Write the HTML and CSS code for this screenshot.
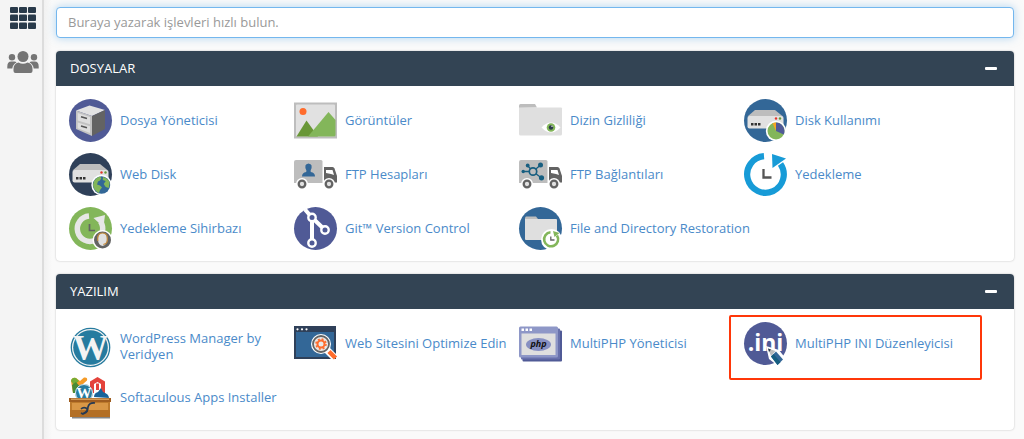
FILE: index.html
```html
<!DOCTYPE html>
<html lang="tr">
<head>
<meta charset="utf-8">
<meta name="viewport" content="width=device-width, initial-scale=1">
<title>cPanel</title>
<link rel="stylesheet" href="styles.css">
</head>
<body>
<div class="layout">
  <nav class="sidebar" aria-label="Menü">
    <a href="#" class="nav-link nav-link-active" aria-label="Ana Sayfa">
      <svg class="nav-icon" viewBox="0 0 32 24"><g fill="#293a4a"><rect x="3" y="1" width="8" height="6" rx="1"/><rect x="12" y="1" width="8" height="6" rx="1"/><rect x="21" y="1" width="8" height="6" rx="1"/><rect x="3" y="8.500" width="8" height="6.500" rx="1"/><rect x="12" y="8.500" width="8" height="6.500" rx="1"/><rect x="21" y="8.500" width="8" height="6.500" rx="1"/><rect x="3" y="16.500" width="8" height="6.500" rx="1"/><rect x="12" y="16.500" width="8" height="6.500" rx="1"/><rect x="21" y="16.500" width="8" height="6.500" rx="1"/></g></svg>
    </a>
    <a href="#" class="nav-link" aria-label="Kullanıcı Yöneticisi">
      <svg class="nav-icon" viewBox="0 0 32 24"><g fill="#757575"><circle cx="16" cy="6.500" r="5.500"/><circle cx="5" cy="7.200" r="3.200"/><circle cx="27" cy="7.200" r="3.200"/><path d="M6.500 23v-4q0-5.500 5-6.500 4.500 2.500 9 0 5 1 5 6.500v2q0 2-2 2h-15q-2 0-2-2z"/><path d="M.3 18.500v-2q0-5 4-5h3q1.500 0 2.200 1-3.700 1.800-4.200 6zM31.700 18.500v-2q0-5-4-5h-3q-1.500 0-2.200 1 3.700 1.800 4.200 6z"/></g></svg>
    </a>
  </nav>
  <main class="content">
    <input class="search" type="text" aria-label="İşlev ara" placeholder="Buraya yazarak işlevleri hızlı bulun.">

    <section class="panel">
      <header class="panel-header">
        <h2 class="panel-title">DOSYALAR</h2>
        <button class="collapse" type="button" aria-label="Daralt"></button>
      </header>
      <div class="grid">
        <a href="#" class="item">
          <svg class="icon" viewBox="0 0 43 43"><circle cx="21.500" cy="21.500" r="21.500" fill="#505a96"/><path d="M7 11.500 20.500 6.500 36 11 23 17z" fill="#e2e2e2"/><path d="M7 11.500 23 17V37L7 30z" fill="#c2c2c2"/><path d="M23 17 36 11V30L23 37z" fill="#636363"/><path d="M8.700 14 21 18V25.300L8.700 21.500zM8.700 23.500 21 27.300V34L8.700 29.300z" fill="#dedede"/><path d="M12 17.800 18 19.500M12 27 18 28.700" stroke="#555" stroke-width="1.700"/></svg>
          <span class="label">Dosya Yöneticisi</span>
        </a>
        <a href="#" class="item">
          <svg class="icon" viewBox="0 0 43 43"><path d="M0 3.500h43v36H0z" fill="#bdbdbd"/><rect x="2" y="5.500" width="39" height="32" rx="1" fill="#e1e1e1"/><circle cx="9" cy="12.500" r="3.500" fill="#ff6c2c"/><path d="M2.500 37.500 12.500 21.500 24 37.500z" fill="#699737"/><path d="M14 37.500 34.500 13 41.500 21V36q0 1.500-1.500 1.500z" fill="#83b65a"/></svg>
          <span class="label">Görüntüler</span>
        </a>
        <a href="#" class="item">
          <svg class="icon" viewBox="0 0 43 43"><path d="M0 9V6.500Q0 5 1.500 5H16l2 3.500z" fill="#bdbdbd"/><path d="M0 8.500H42q1 0 1 1V35q0 1.500-1.500 1.500h-40Q0 36.500 0 35z" fill="#dfdfdf"/><path d="M22.500 28.500Q32 18.500 41.500 28.500 32 38.500 22.500 28.500z" fill="#fff"/><circle cx="32" cy="28.500" r="4.300" fill="#83b65a"/><circle cx="32" cy="28.500" r="2.200" fill="#293a4a"/><circle cx="33" cy="27.300" r=".7" fill="#fff"/></svg>
          <span class="label">Dizin Gizliliği</span>
        </a>
        <a href="#" class="item">
          <svg class="icon" viewBox="0 0 43 43"><circle cx="21.500" cy="21.500" r="21.500" fill="#336797"/><path d="M3.500 17.500 11 11H31L39 17.500z" fill="#bdbdbd"/><rect x="3.500" y="17" width="36" height="12.500" rx="2" fill="#e1e1e1"/><g fill="#333"><path d="M7 24h2.500v2.500H7zM10.500 24H13v2.500h-2.500zM14 24h2.500v2.500H14z"/></g><circle cx="32" cy="19.500" r="1.200" fill="#e2352b"/><circle cx="36" cy="19.500" r="1.200" fill="#699737"/><circle cx="32" cy="32" r="10.200" fill="#fff"/><circle cx="32" cy="32" r="8.500" fill="#83b65a"/><path d="M32 32V23.500A8.500 8.500 0 0 1 39.700 35.500z" fill="#505a96"/><path d="M32 32 28.500 24.300A8.500 8.500 0 0 1 32 23.500z" fill="#f5a623"/></svg>
          <span class="label">Disk Kullanımı</span>
        </a>
        <a href="#" class="item">
          <svg class="icon" viewBox="0 0 43 43"><circle cx="21.500" cy="21.500" r="21.500" fill="#2f4059"/><path d="M3.500 17.500 11 11H31L39 17.500z" fill="#bdbdbd"/><rect x="3.500" y="17" width="36" height="12.500" rx="2" fill="#e1e1e1"/><g fill="#333"><path d="M7 24h2.500v2.500H7zM10.500 24H13v2.500h-2.500zM14 24h2.500v2.500H14z"/></g><circle cx="32.500" cy="19.500" r="1.200" fill="#e2352b"/><circle cx="36.500" cy="19.500" r="1.200" fill="#699737"/><circle cx="32.500" cy="32" r="10.200" fill="#fff"/><circle cx="32.500" cy="32" r="8.700" fill="#336797"/><path d="M25 28q2-3.500 5.500-4.500l2 1.500-1.500 2.500-2 1-1 3 3 1 2 2-2 2.500-1 3q-5-2-6-8z" fill="#83b65a"/><path d="M34 24q5 1 6.700 5.500l-1 5.500-3-1-2-3 2-3-3-1z" fill="#83b65a"/></svg>
          <span class="label">Web Disk</span>
        </a>
        <a href="#" class="item">
          <svg class="icon" viewBox="0 0 43 43"><path d="M0 9q0-2 2-2h25q1.500 0 1.500 1.500V30H0z" fill="#bdbdbd"/><path d="M8 23.500q0-4 4.200-4.500l.2-1.500q-3-6.500 2.100-7 5.100.5 2.100 7l.2 1.500q4.200.5 4.200 4.500z" fill="#336797"/><path d="M30 14h8.500q1.500 0 2 1.500L43 23v6.500H30z" fill="#636363"/><path d="M32 17h6.500l1.500 5-3-1-5-1z" fill="#fff"/><circle cx="8" cy="31" r="6" fill="#fff"/><circle cx="35" cy="31" r="6" fill="#fff"/><circle cx="8" cy="31" r="3.300" fill="#e1e1e1" stroke="#636363" stroke-width="2.300"/><circle cx="35" cy="31" r="3.300" fill="#e1e1e1" stroke="#636363" stroke-width="2.300"/></svg>
          <span class="label">FTP Hesapları</span>
        </a>
        <a href="#" class="item">
          <svg class="icon" viewBox="0 0 43 43"><path d="M0 9q0-2 2-2h25q1.500 0 1.500 1.500V30H0z" fill="#bdbdbd"/><g stroke="#175e80" stroke-width="1.300"><path d="M14 18.500H4M14 18.500 8.500 12.500M14 18.500 21.500 12M14 18.500 22.500 25" fill="none"/><circle cx="14" cy="18.500" r="3.700" fill="#bdbdbd" stroke-width="1.700"/></g><g fill="#175e80"><circle cx="4.200" cy="18.500" r="1.700"/><circle cx="8.700" cy="12.500" r="1.900"/><circle cx="21.500" cy="12" r="2.500"/><circle cx="22.500" cy="24.800" r="2.600"/></g><path d="M30 14h8.500q1.500 0 2 1.500L43 23v6.500H30z" fill="#636363"/><path d="M32 17h6.500l1.500 5-3-1-5-1z" fill="#fff"/><circle cx="8" cy="31" r="6" fill="#fff"/><circle cx="35" cy="31" r="6" fill="#fff"/><circle cx="8" cy="31" r="3.300" fill="#e1e1e1" stroke="#636363" stroke-width="2.300"/><circle cx="35" cy="31" r="3.300" fill="#e1e1e1" stroke="#636363" stroke-width="2.300"/></svg>
          <span class="label">FTP Bağlantıları</span>
        </a>
        <a href="#" class="item">
          <svg class="icon" viewBox="0 0 43 43"><path d="M20 3.200A18.300 18.300 0 1 0 36.500 11" fill="none" stroke="#179bd7" stroke-width="6.200"/><path d="M28 1 28.500 15 42 5.500z" fill="#179bd7"/><path d="M19.500 16V24.500H27.500" fill="none" stroke="#555" stroke-width="2.300"/></svg>
          <span class="label">Yedekleme</span>
        </a>
        <a href="#" class="item">
          <svg class="icon" viewBox="0 0 43 43"><circle cx="21.500" cy="21.500" r="21.500" fill="#83b65a"/><path d="M20 9A12.700 12.700 0 1 0 31.500 14.500" fill="none" stroke="#e7e7e7" stroke-width="5.500"/><path d="M24.500 11 36 8 34.500 20z" fill="#e7e7e7"/><path d="M20.500 17V23.500H26" fill="none" stroke="#636363" stroke-width="1.700"/><circle cx="33.500" cy="33" r="10" fill="#fff"/><circle cx="33.500" cy="33" r="8.500" fill="#636363"/><path d="M29 32q0-6 4.500-6t4.500 6q0 6-4.500 7Q29 38 29 32z" fill="#e1e1e1"/><path d="M28.700 34V30q1-4 4.800-4 4 0 4.800 4v4q-.5 3-4 3.500" fill="none" stroke="#c58b3d" stroke-width="1.200"/></svg>
          <span class="label">Yedekleme Sihirbazı</span>
        </a>
        <a href="#" class="item">
          <svg class="icon" viewBox="0 0 43 43"><circle cx="21.500" cy="21.500" r="21.500" fill="#505a96"/><g fill="none" stroke="#fff"><path d="M11 2.500 18 10.500 31 23M18 10.500V36" stroke-width="4"/><g fill="#505a96" stroke-width="2.400"><circle cx="18" cy="10.500" r="3.700"/><circle cx="31" cy="23" r="3.700"/><circle cx="18" cy="36" r="3.700"/></g></g></svg>
          <span class="label">Git™ Version Control</span>
        </a>
        <a href="#" class="item">
          <svg class="icon" viewBox="0 0 43 43"><circle cx="21.500" cy="21.500" r="21.500" fill="#336797"/><path d="M6 12V10.500L7 9.500H17l2 2.500z" fill="#bdbdbd"/><path d="M6 12H37q1 0 1 1V32q0 1-1 1H7q-1 0-1-1z" fill="#dfdfdf"/><circle cx="32.500" cy="32.500" r="10.500" fill="#fff"/><path d="M31.500 25.300A7 7 0 1 0 38 28.500" fill="none" stroke="#83b65a" stroke-width="2.600"/><path d="M34 24 40.500 26 35.500 30z" fill="#83b65a"/><path d="M31.800 29.500V33H35.500" fill="none" stroke="#636363" stroke-width="1.300"/></svg>
          <span class="label">File and Directory Restoration</span>
        </a>
      </div>
    </section>

    <section class="panel">
      <header class="panel-header">
        <h2 class="panel-title">YAZILIM</h2>
        <button class="collapse" type="button" aria-label="Daralt"></button>
      </header>
      <div class="grid">
        <a href="#" class="item">
          <svg class="icon" viewBox="0 0 43 43"><circle cx="21.500" cy="21.500" r="19.200" fill="#f3f3f3" stroke="#267b9f" stroke-width="1.300"/><circle cx="21.500" cy="21.500" r="17.300" fill="#267b9f"/><text x="21.500" y="34" class="wp-letter">W</text></svg>
          <span class="label">WordPress Manager by Veridyen</span>
        </a>
        <a href="#" class="item">
          <svg class="icon" viewBox="0 0 43 43"><path d="M0 4h42v33H0z" fill="#2f4059"/><path d="M2 10h38v25H2z" fill="#336797"/><g fill="#fff"><circle cx="3.500" cy="7.300" r="1.100"/><circle cx="8" cy="7.300" r="1.100"/><circle cx="12.500" cy="7.300" r="1.100"/></g><path d="M33 28 41 36" stroke="#fff" stroke-width="7"/><circle cx="27" cy="22" r="10" fill="#fff"/><circle cx="27" cy="22" r="8" fill="#e8e8e8" stroke="#636363" stroke-width="1.800"/><path d="M35 29.500 41.500 36" stroke="#ff6c2c" stroke-width="4.500"/><circle cx="27" cy="22" r="3.500" fill="none" stroke="#ff6c2c" stroke-width="2"/><circle cx="27" cy="22" r="5" fill="none" stroke="#ff6c2c" stroke-width="1.500" stroke-dasharray="2 1.930"/></svg>
          <span class="label">Web Sitesini Optimize Edin</span>
        </a>
        <a href="#" class="item">
          <svg class="icon" viewBox="0 0 43 43"><rect x="3.500" y="8.500" width="39.500" height="31" rx="1" fill="#505a96"/><rect x="2" y="6.500" width="39" height="31" rx="1" fill="#6871ac"/><rect x="0" y="4.500" width="39" height="31" rx="1.500" fill="#8e97c7"/><path d="M2.500 11.500h34V33h-34z" fill="#dfdfdf"/><g fill="#fff"><rect x="2.500" y="6.500" width="2.500" height="2.500"/><rect x="6.500" y="6.500" width="2.500" height="2.500"/><rect x="10.500" y="6.500" width="2.500" height="2.500"/></g><ellipse cx="19.500" cy="22.500" rx="12.500" ry="6.500" fill="#8790c2"/><text x="19.500" y="25" class="php-text">php</text></svg>
          <span class="label">MultiPHP Yöneticisi</span>
        </a>
        <a href="#" class="item item-highlighted">
          <svg class="icon" viewBox="0 0 43 43"><circle cx="21.500" cy="21.500" r="21.500" fill="#505a96"/><text x="21.500" y="28.500" class="ini-text">.ini</text><path d="M22 24 35 28 42 37 34 44 25 37z" fill="#fff"/><path d="M24 26.500 31.500 29 27 34z" fill="#bdbdbd"/><path d="M24 26.500 27 27.500 25 30z" fill="#293a4a"/><path d="M32 29.500 39 37.500 33.500 43 27 34.500z" fill="#336797"/><path d="M29.500 32 36.500 40.300 33.500 43 27 34.500z" fill="#175e80"/></svg>
          <span class="label">MultiPHP INI Düzenleyicisi</span>
        </a>
        <a href="#" class="item">
          <svg class="icon" viewBox="0 0 43 43"><path d="M4 17 2 5q1-4 5-3l4 3 4-3.500q4-.5 3 3L14 8l4 9z" fill="#f59b27"/><path d="M2 5q1-4 5-3l3 3-5 4z" fill="#74ad36"/><path d="M3 9 7 6l5 6-3 5H4z" fill="#4a8b35"/><path d="M21 17V5.500L28.500 1 36 5.500V17h-4V8l-3.500-2L25 8v9z" fill="#e4423b"/><path d="M27 7.500h3V14h-3z" fill="#e4423b"/><circle cx="15" cy="17" r="9" fill="#267b9f"/><circle cx="15" cy="17" r="8.500" fill="none" stroke="#dcebf2"/><text x="15" y="22" class="box-letter">W</text><path d="M25 21q0-4 4-5l3-4 2 4q6 2 6 6z" fill="#17639a"/><path d="M3 41h38v1.500H3z" fill="#858585"/><path d="M1 25h40v16H1z" fill="#bd7a2c"/><path d="M3 27h36v12H3z" fill="#d99746"/><path d="M1 34h40v7H1z" fill="#b36f25"/><path d="M0 22h42v4H0z" fill="#9f5d20"/><path d="M2 22.500h38v1.500H2z" fill="#d29a57"/><path d="M26 27q-6-.5-7 4 0 5-5 6.500M12 33q2-2 5-1 4 3-3 6l-2-1" fill="none" stroke="#263a53" stroke-width="1.700"/></svg>
          <span class="label">Softaculous Apps Installer</span>
        </a>
      </div>
    </section>
  </main>
</div>
</body>
</html>
```
FILE: styles.css
```css
* { box-sizing: border-box; }

body {
  margin: 0;
  background: #fafafa;
  color: #333;
  font: 13px/16px "Open Sans", "Noto Sans", sans-serif;
}

.layout {
  display: flex;
  min-height: 100vh;
}

.sidebar {
  display: flex;
  flex: none;
  flex-direction: column;
  align-items: center;
  gap: 20px;
  width: 44px;
  padding: 6px 0 0 4px;
  background: #f4f4f4;
  border-right: 2px solid #dcdcdc;
}

.nav-link,
.nav-icon {
  display: block;
}

.nav-icon {
  width: 32px;
  height: 24px;
}

.content {
  display: flex;
  flex: 1;
  flex-direction: column;
  gap: 13px;
  min-width: 0;
  padding: 7px 10px 9px 12px;
  background: linear-gradient(90deg, #f1f1f1, #fafafa 8px);
}

.search {
  width: 100%;
  height: 31px;
  padding: 0 11px 2px;
  border: 1px solid #74b7ee;
  border-radius: 4px;
  background: #fff;
  box-shadow: 0 0 8px rgba(102, 175, 233, 0.5);
  color: #555;
  font: inherit;
  outline: none;
}

.search::placeholder {
  color: #999;
  opacity: 1;
}

.panel {
  background: #fff;
  border-radius: 4px;
  box-shadow: 0 0 2px rgba(0, 0, 0, 0.25);
}

.panel-header {
  display: flex;
  align-items: center;
  justify-content: space-between;
  height: 35px;
  padding: 0 15px 0 14px;
  border-radius: 4px 4px 0 0;
  background: #334454;
  color: #fff;
}

.panel-title {
  margin: 0;
  padding-bottom: 2px;
  font-size: 13px;
  font-weight: 400;
}

.collapse {
  display: flex;
  align-items: center;
  justify-content: center;
  width: 16px;
  height: 16px;
  padding: 0;
  border: 0;
  background: none;
}

.collapse::before {
  content: "";
  width: 12px;
  height: 3px;
  border-radius: 1px;
  background: #fff;
}

.grid {
  display: grid;
  grid-template-columns: repeat(auto-fill, 225px);
  grid-auto-rows: 50px;
  row-gap: 4px;
  align-items: start;
  padding: 13px 13px 4px;
}

.item {
  display: flex;
  align-items: center;
  gap: 8px;
  position: relative;
  color: #4a8ac9;
  text-decoration: none;
}

.icon {
  flex: none;
  width: 43px;
  height: 43px;
  overflow: visible;
}

/* Labels may run a little into the column gutter before they wrap. */
.label {
  margin-right: -12px;
  padding: 8px 0 10px;
}

.item-highlighted::after {
  content: "";
  position: absolute;
  inset: -7px -13px -15px -15px;
  border: 2px solid #ff3709;
  border-radius: 2px;
  pointer-events: none;
}

.wp-letter {
  fill: #f3f3f3;
  font: bold 36px "Liberation Serif", serif;
  text-anchor: middle;
}

.box-letter {
  fill: #fff;
  font: bold 15px "Liberation Serif", serif;
  text-anchor: middle;
}

.php-text {
  fill: #111;
  font: italic bold 9px "Open Sans", sans-serif;
  text-anchor: middle;
}

.ini-text {
  fill: #fff;
  font: bold 23px "Open Sans", sans-serif;
  text-anchor: middle;
}
```
